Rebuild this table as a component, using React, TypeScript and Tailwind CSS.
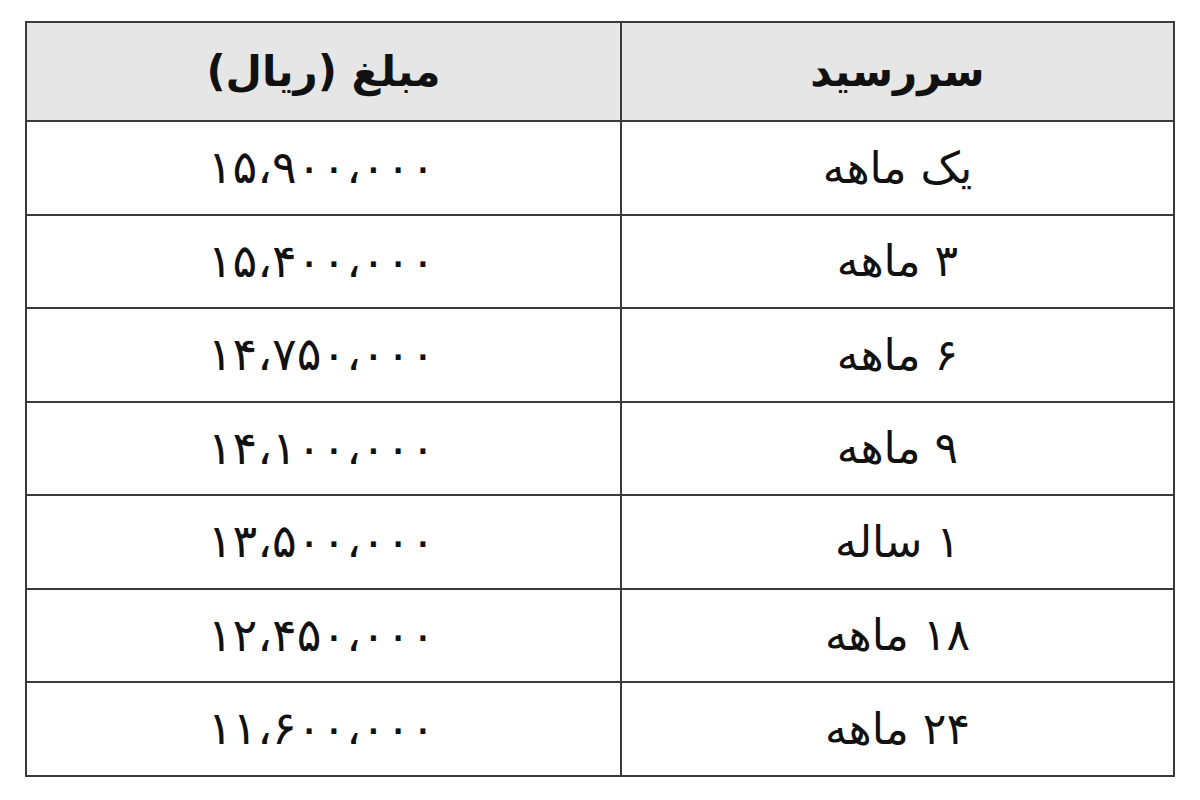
const ROWS: { term: string; amount: string }[] = [
  { term: "یک ماهه", amount: "۱۵،۹۰۰،۰۰۰" },
  { term: "۳ ماهه", amount: "۱۵،۴۰۰،۰۰۰" },
  { term: "۶ ماهه", amount: "۱۴،۷۵۰،۰۰۰" },
  { term: "۹ ماهه", amount: "۱۴،۱۰۰،۰۰۰" },
  { term: "۱ ساله", amount: "۱۳،۵۰۰،۰۰۰" },
  { term: "۱۸ ماهه", amount: "۱۲،۴۵۰،۰۰۰" },
  { term: "۲۴ ماهه", amount: "۱۱،۶۰۰،۰۰۰" },
];

export default function App() {
  return (
    <div
      className="w-[1200px] h-[800px] bg-white pt-[21px] pl-[25px]"
      style={{ fontFamily: '"DejaVu Sans", "Noto Sans", sans-serif' }}
    >
      <table dir="rtl" className="w-[1150px] border-collapse border-2 border-[#3a3a3a] text-[#111]">
        <thead>
          <tr className="bg-[#e6e6e6] h-[99px]">
            <th className="w-[553px] border-2 border-[#3a3a3a] text-[42px] font-bold">سررسید</th>
            <th className="border-2 border-[#3a3a3a] text-[42px] font-bold">مبلغ (ریال)</th>
          </tr>
        </thead>
        <tbody>
          {ROWS.map((r) => (
            <tr key={r.term} className="h-[93.5px]">
              <td className="border-2 border-[#3a3a3a] text-center text-[44px]">{r.term}</td>
              <td className="border-2 border-[#3a3a3a] text-center text-[46px]">
                <span className="tracking-[7px] pr-[4px]">{r.amount}</span>
              </td>
            </tr>
          ))}
        </tbody>
      </table>
    </div>
  );
}
